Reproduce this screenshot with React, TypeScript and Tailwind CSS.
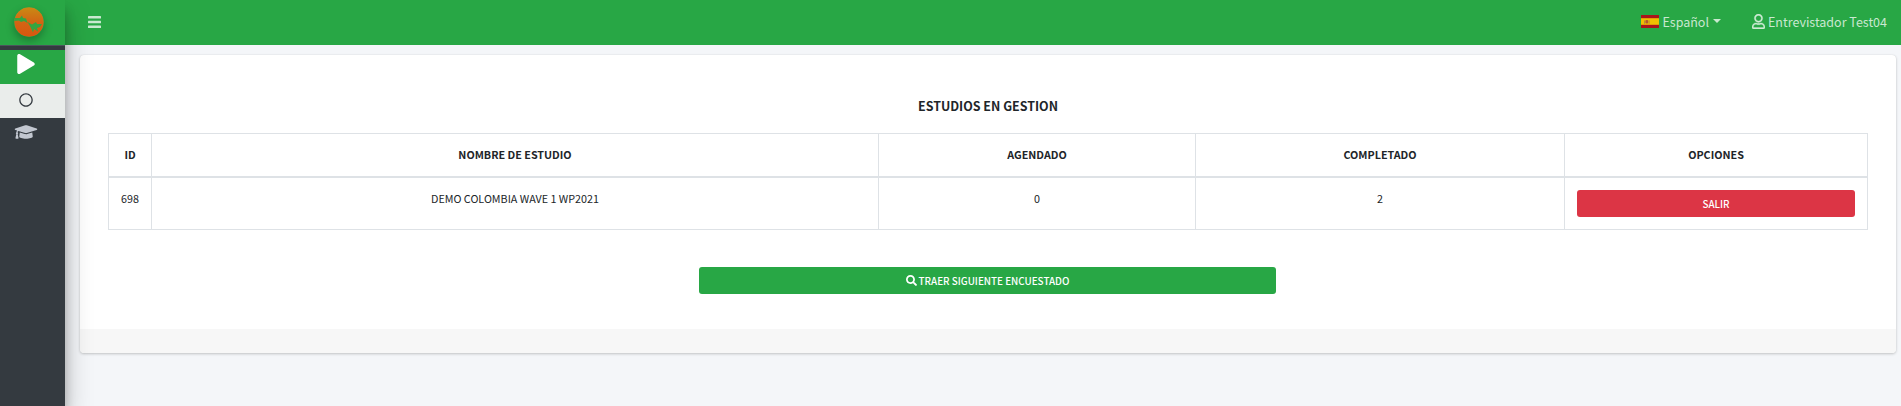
import { FaPlay, FaRegCircle, FaGraduationCap, FaRegUser, FaSearch } from "react-icons/fa";

const headers = ["ID", "NOMBRE DE ESTUDIO", "AGENDADO", "COMPLETADO", "OPCIONES"];
const cells = ["698", "DEMO COLOMBIA WAVE 1 WP2021", "0", "2"];

function Logo() {
  return (
    <svg viewBox="0 0 30 30" className="h-[30px] w-[30px] rounded-full shadow-[0_4px_8px_rgba(0,0,0,0.28)]">
      <defs>
        <linearGradient id="orb" x1="0" y1="0" x2="0" y2="1">
          <stop offset="0" stopColor="#c98a14" />
          <stop offset="0.5" stopColor="#d36514" />
          <stop offset="1" stopColor="#d8560f" />
        </linearGradient>
      </defs>
      <circle cx="15" cy="15" r="14.7" fill="url(#orb)" />
      <path d="M1 11L6 11L8 8.5L9 11L12 11.5L13.5 16L10 14L7 15L5 13.5L0 14Z" fill="#35a540" />
      <path d="M13.5 15L18 17.5L22 15L23 17L28 17L26 20L23 21L24 24.5L20 22L19 25.5L16.5 20Z" fill="#35a540" />
    </svg>
  );
}

function MenuBars() {
  return (
    <svg viewBox="0 0 13 12" className="mb-px h-[12px] w-[13px]" fill="currentColor">
      <rect width="13" height="2.6" rx="0.5" />
      <rect y="4.7" width="13" height="2.6" rx="0.5" />
      <rect y="9.4" width="13" height="2.6" rx="0.5" />
    </svg>
  );
}

function SpainFlag() {
  return (
    <svg viewBox="0 0 18 13" className="mb-[2px] h-[13px] w-[18px]">
      <rect width="18" height="13" fill="#aa151b" />
      <rect y="3.2" width="18" height="6.6" fill="#f1bf00" />
      <rect x="3" y="5.4" width="1" height="3.4" fill="#b98a3a" />
      <rect x="4.4" y="5" width="2.8" height="3.6" rx="1" fill="#b5592c" />
      <rect x="7.6" y="5.4" width="1" height="3.4" fill="#b98a3a" />
    </svg>
  );
}

export default function App() {
  return (
    <div className="flex h-[406px] w-[1901px] overflow-hidden bg-[#f4f6f9] font-['Noto_Sans_CJK_SC','Liberation_Sans',sans-serif] text-[#212529]">
      <aside className="z-10 flex h-full w-[65px] shrink-0 flex-col bg-[#343a40] shadow-[0_14px_28px_rgba(0,0,0,0.25),0_10px_10px_rgba(0,0,0,0.22)]">
        <div className="h-[45px] bg-[#28a745] pl-[14px] pt-[7px]">
          <Logo />
        </div>
        <div className="h-[5px] border-t border-[#4b545c]" />
        <div className="h-[34px] bg-[#28a745] pl-[17px] pt-[4px]">
          <FaPlay className="h-[20px] w-[18px] text-white" />
        </div>
        <div className="h-[34px] bg-[#eaedeb] pl-[19px] pt-[9px]">
          <FaRegCircle className="h-[14px] w-[14px] text-[#343a40]" />
        </div>
        <div className="pl-[14px] pt-[5px]">
          <FaGraduationCap className="h-[18px] w-[24px] text-[#c2c7d0]" />
        </div>
      </aside>

      <div className="flex grow flex-col">
        <nav className="flex h-[45px] items-center bg-[#28a745] pl-[23px] pr-[14px] text-[12.5px] text-white/75">
          <MenuBars />
          <div className="ml-auto flex items-center">
            <SpainFlag />
            <span className="ml-[3px] pb-[2px] leading-5">Español</span>
            <svg viewBox="0 0 8 4" className="mb-[3px] ml-[4px] h-[4px] w-[8px]" fill="currentColor">
              <path d="M0 0H8L4 4Z" />
            </svg>
          </div>
          <div className="ml-[31px] flex items-center">
            <FaRegUser className="mb-[2px] h-[15px] w-[13px]" stroke="currentColor" strokeWidth="10" />
            <span className="ml-[3px] pb-[2px] leading-5">Entrevistador Test04</span>
          </div>
        </nav>

        <main className="ml-[15px] mt-[10px] flex h-[298px] w-[1816px] flex-col overflow-hidden rounded-[4px] bg-white shadow-[0_0_1px_rgba(0,0,0,0.125),0_1px_3px_rgba(0,0,0,0.2)]">
          <div className="flex grow flex-col items-start pl-7">
            <h1 className="mt-[41px] w-[1760px] text-center text-[12.45px] font-bold leading-5">ESTUDIOS EN GESTION</h1>
            <table className="mt-[17px] w-[1760px] table-fixed border-collapse text-center text-[10.75px]">
              <colgroup>
                <col className="w-[43px]" />
                <col className="w-[727px]" />
                <col className="w-[317px]" />
                <col className="w-[369px]" />
                <col className="w-[303px]" />
              </colgroup>
              <thead>
                <tr className="h-[43px]">
                  {headers.map((h) => (
                    <th key={h} className="border border-b-2 border-[#dee2e6] px-0 pb-0 pt-px font-bold leading-4">{h}</th>
                  ))}
                </tr>
              </thead>
              <tbody>
                <tr className="h-[53px]">
                  {cells.map((c) => (
                    <td key={c} className="border border-[#dee2e6] px-0 pb-0 pt-[13px] align-top leading-4">{c}</td>
                  ))}
                  <td className="border border-[#dee2e6] px-3 py-0">
                    <button className="flex h-[27px] w-full items-center justify-center rounded-[3px] bg-[#dc3545] pt-px text-[9.85px] font-medium leading-4 text-white">SALIR</button>
                  </td>
                </tr>
              </tbody>
            </table>
            <button className="ml-[591px] mt-[37px] flex h-[27px] w-[577px] items-center justify-center rounded-[3px] bg-[#28a745] text-[9.85px] font-medium leading-4 text-white">
              <FaSearch className="mr-[2px] h-[11px] w-[11px]" />
              <span className="pt-px">TRAER SIGUIENTE ENCUESTADO</span>
            </button>
          </div>
          <footer className="h-[24px] shrink-0 bg-[#f7f7f7]" />
        </main>
      </div>
    </div>
  );
}
